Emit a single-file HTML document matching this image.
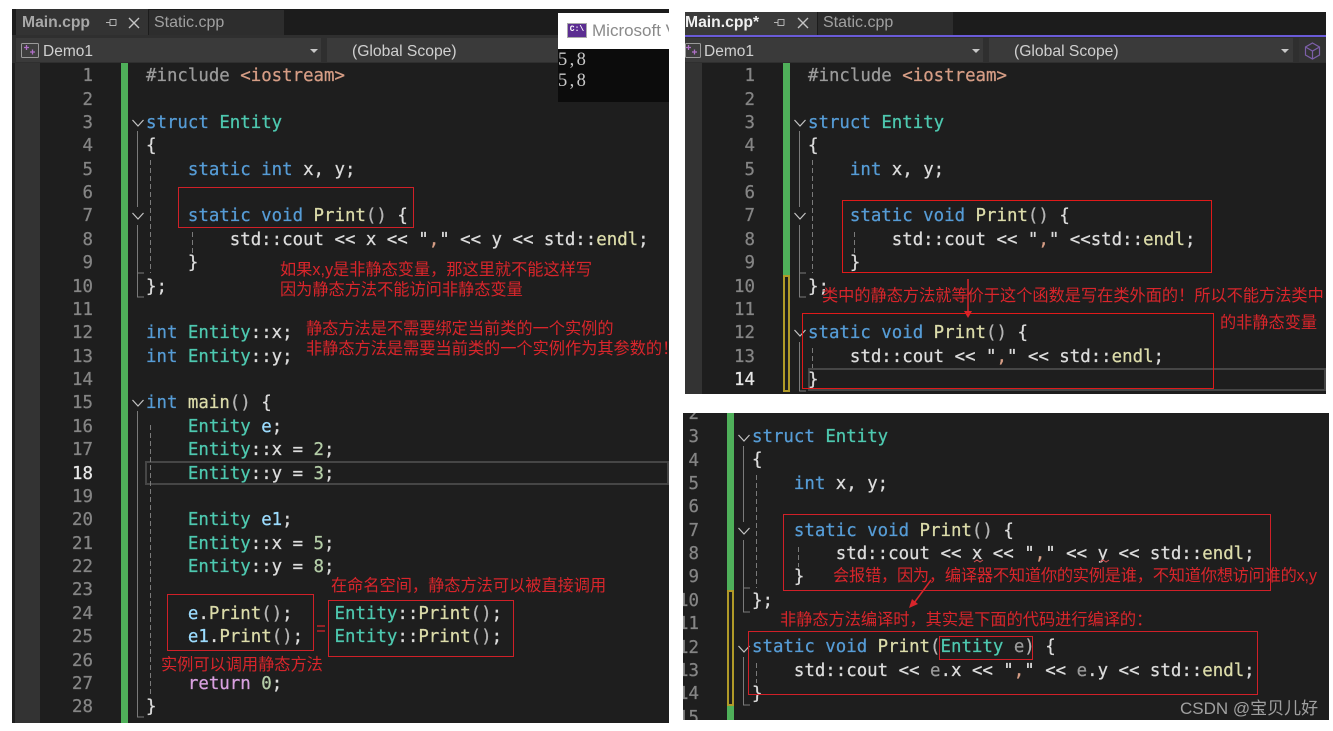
<!DOCTYPE html>
<html><head><meta charset="utf-8">
<style>
html,body{margin:0;padding:0;background:#fff;width:1333px;height:727px;overflow:hidden}
.abs,.c,.n,.z,.u,.a,.b{position:absolute}
.layer{position:absolute;left:0;top:0;width:1333px;height:727px}
.z{background:#1e1e1e}
pre{margin:0;position:absolute;font-family:"DejaVu Sans Mono","Liberation Mono",monospace;font-size:17.4px;line-height:23.37px;color:#dcdcdc;white-space:pre;-webkit-text-stroke:.25px}
pre.n{color:#858585;text-align:right;width:40px}
pre.n b{color:#e8e8e8;font-weight:normal}
pre.con{-webkit-text-stroke:0}
.k{color:#569cd6}.t{color:#4ec9b0}.f{color:#dcdcaa}.v{color:#9cdcfe}.d{color:#b5cea8}.s{color:#d69d85}.p{color:#9b9b9b}.r{color:#d8a0df}.g{color:#9a9a9a}.o{color:#b4b4b4}
.u{font-family:"Liberation Sans","Noto Sans CJK SC",sans-serif;font-size:15.5px;line-height:22px;white-space:nowrap;color:#d0d0d0}
.a{font-family:"Liberation Sans","Noto Sans CJK SC",sans-serif;font-size:16.2px;line-height:20px;white-space:nowrap;color:#d9252b}
.b{border:1px solid #d02028;box-sizing:border-box}
</style></head>
<body>

<!-- PANEL 1 -->
<div class="layer" style="clip-path:inset(9px 664px 4px 12px);background:#1e1e1e">
<div class="z" style="left:15px;top:63px;width:25px;height:664px;background:#333"></div>
<div class="z" style="left:12px;top:9px;width:657px;height:28px;background:#1c1c1c"></div>
<div class="z" style="left:16px;top:9px;width:132px;height:26px;background:#333"></div>
<div class="z" style="left:149px;top:10px;width:135px;height:25px;background:#2d2d2d"></div>
<div class="z" style="left:12px;top:35px;width:657px;height:28px;background:#2f2f2f"></div>
<div class="z" style="left:16px;top:38px;width:305px;height:24px;background:#3a3a3a"></div>
<div class="z" style="left:327px;top:38px;width:342px;height:24px;background:#3a3a3a"></div>
<div class="u" style="left:22px;top:12px;font-weight:bold;color:#a8a8a8;font-size:15.7px">Main.cpp</div>
<div class="u" style="left:154px;top:12px;color:#a0a0a0;font-size:16px">Static.cpp</div>
<div class="u" style="left:43px;top:41px;font-size:15.5px">Demo1</div>
<div class="u" style="left:352px;top:41px;font-size:15.7px">(Global Scope)</div>
<div class="z" style="left:121px;top:63px;width:7px;height:668px;background:#4fb05a"></div>
<pre class="n" style="left:53px;top:65.2px">1
2
3
4
5
6
7
8
9
10
11
12
13
14
15
16
17
<b>18</b>
19
20
21
22
23
24
25
26
27
28</pre>
<div class="z" style="left:145px;top:461px;width:524px;height:24px;background:none;border:2px solid #464646;box-sizing:border-box"></div>
<pre style="left:146px;top:65.2px"><span class="p">#include</span> <span class="s">&lt;iostream&gt;</span>

<span class="k">struct</span> <span class="t">Entity</span>
{
    <span class="k">static int</span> x, y;

    <span class="k">static void</span> <span class="f">Print</span><span class="o">()</span> {
        std::cout &lt;&lt; x &lt;&lt; "<span class="s">,</span>" &lt;&lt; y &lt;&lt; std::<span class="f">endl</span>;
    }
};

<span class="k">int</span> <span class="t">Entity</span>::x;
<span class="k">int</span> <span class="t">Entity</span>::y;

<span class="k">int</span> <span class="f">main</span><span class="o">()</span> {
    <span class="t">Entity</span> <span class="v">e</span>;
    <span class="t">Entity</span>::x = <span class="d">2</span>;
    <span class="t">Entity</span>::y = <span class="d">3</span>;

    <span class="t">Entity</span> <span class="v">e1</span>;
    <span class="t">Entity</span>::x = <span class="d">5</span>;
    <span class="t">Entity</span>::y = <span class="d">8</span>;

    <span class="v">e</span>.<span class="f">Print</span><span class="o">()</span>;    <span class="t">Entity</span>::<span class="f">Print</span><span class="o">()</span>;
    <span class="v">e1</span>.<span class="f">Print</span><span class="o">()</span>;   <span class="t">Entity</span>::<span class="f">Print</span><span class="o">()</span>;

    <span class="r">return</span> <span class="d">0</span>;
}</pre>
</div>

<!-- console -->
<div class="z" style="left:558px;top:13px;width:111px;height:36px;background:#fff;overflow:hidden">
  <div class="z" style="left:9px;top:10px;width:20px;height:15px;background:#5b2d91;border:1px solid #aaa;box-sizing:border-box;color:#fff;font:bold 8px/12px 'Liberation Mono',monospace;text-align:center">C:\</div>
  <div class="u" style="left:34px;top:7px;color:#8a8a8a;font-size:17px">Microsoft Visual</div>
</div>
<div class="z" style="left:558px;top:49px;width:111px;height:53px;background:#0c0c0c"></div>
<pre class="con" style="left:558px;top:50px;font-family:'Liberation Serif',serif;font-size:18.5px;line-height:20.5px;color:#c8c8c8;letter-spacing:2.4px">5,8
5,8</pre>

<!-- PANEL 2 -->
<div class="layer" style="clip-path:inset(12px 7px 333px 685px);background:#1e1e1e">
<div class="z" style="left:685px;top:63px;width:17px;height:340px;background:#333"></div>
<div class="z" style="left:685px;top:12px;width:641px;height:23px;background:#1c1c1c"></div>
<div class="z" style="left:685px;top:12px;width:132px;height:23px;background:#3a3a3a"></div>
<div class="z" style="left:818px;top:12px;width:135px;height:23px;background:#2d2d2d"></div>
<div class="z" style="left:685px;top:35px;width:641px;height:2px;background:#6a5bd8"></div>
<div class="z" style="left:685px;top:37px;width:641px;height:26px;background:#2f2f2f"></div>
<div class="z" style="left:685px;top:38px;width:298px;height:24px;background:#3a3a3a"></div>
<div class="z" style="left:989px;top:38px;width:304px;height:24px;background:#3a3a3a"></div>
<div class="z" style="left:1299px;top:38px;width:27px;height:24px;background:#333"></div>
<div class="u" style="left:685px;top:12px;font-weight:bold;color:#f0f0f0;font-size:15.7px">Main.cpp*</div>
<div class="u" style="left:823px;top:12px;color:#a0a0a0;font-size:16px">Static.cpp</div>
<div class="u" style="left:704px;top:41px;font-size:15.5px">Demo1</div>
<div class="u" style="left:1014px;top:41px;font-size:15.7px">(Global Scope)</div>
<div class="z" style="left:783px;top:63px;width:7px;height:212px;background:#4fb05a"></div>
<div class="z" style="left:783px;top:275px;width:7px;height:117px;box-sizing:border-box;background:none;border:2px solid #b09a28"></div>
<pre class="n" style="left:715px;top:65.2px">1
2
3
4
5
6
7
8
9
10
11
12
13
<b>14</b></pre>
<div class="z" style="left:808px;top:368px;width:518px;height:23px;background:none;border:2px solid #464646;box-sizing:border-box"></div>
<pre style="left:808px;top:65.2px"><span class="p">#include</span> <span class="s">&lt;iostream&gt;</span>

<span class="k">struct</span> <span class="t">Entity</span>
{
    <span class="k">int</span> x, y;

    <span class="k">static void</span> <span class="f">Print</span><span class="o">()</span> {
        std::cout &lt;&lt; "<span class="s">,</span>" &lt;&lt;std::<span class="f">endl</span>;
    }
};

<span class="k">static void</span> <span class="f">Print</span><span class="o">()</span> {
    std::cout &lt;&lt; "<span class="s">,</span>" &lt;&lt; std::<span class="f">endl</span>;
}</pre>
</div>

<!-- PANEL 3 -->
<div class="layer" style="clip-path:inset(413px 4px 7px 683px);background:#1e1e1e">
<div class="z" style="left:727px;top:413px;width:7px;height:177px;background:#4fb05a"></div>
<div class="z" style="left:727px;top:590px;width:7px;height:116px;box-sizing:border-box;background:none;border:2px solid #b09a28"></div>
<div class="z" style="left:727px;top:706px;width:7px;height:14px;background:#4fb05a"></div>
<pre class="n" style="left:659px;top:402.8px">2
3
4
5
6
7
8
9
10
11
12
13
14
15</pre>
<pre style="left:752px;top:426.1px"><span class="k">struct</span> <span class="t">Entity</span>
{
    <span class="k">int</span> x, y;

    <span class="k">static void</span> <span class="f">Print</span><span class="o">()</span> {
        std::cout &lt;&lt; x &lt;&lt; "<span class="s">,</span>" &lt;&lt; y &lt;&lt; std::<span class="f">endl</span>;
    }
};

<span class="k">static void</span> <span class="f">Print</span><span class="o">(</span><span class="t">Entity</span> <span class="g">e</span><span class="o">)</span> {
    std::cout &lt;&lt; <span class="g">e</span>.x &lt;&lt; "<span class="s">,</span>" &lt;&lt; <span class="g">e</span>.y &lt;&lt; std::<span class="f">endl</span>;
}</pre>
</div>

<!-- guides, icons -->
<svg class="abs" style="left:0;top:0" width="1333" height="727" viewBox="0 0 1333 727" fill="none">
<g stroke="#7a7a7a" stroke-width="1">
 <path d="M137.5 131V207M137.5 225V297H144M137.5 273H144M137.5 411V717H144"/>
 <path d="M150.5 160V273M192.5 232V254M150.5 425V695" stroke-dasharray="5 3"/>
 <path d="M799.5 131V207M799.5 225V297H806M799.5 273H806M799.5 342V391H806"/>
 <path d="M812.5 160V273M854.5 232V254M812.5 348V368" stroke-dasharray="5 3"/>
 <path d="M743.5 446V522M743.5 540V612H750M743.5 588H750M743.5 657V705H750"/>
 <path d="M756.5 475V588M798.5 547V567M756.5 663V683" stroke-dasharray="5 3"/>
</g>
<g stroke="#c4c4c4" stroke-width="1.2">
 <path d="M132.5 120L138 126L143.5 120M132.5 213L138 219L143.5 213M132.5 400L138 406L143.5 400"/>
 <path d="M794.5 120L800 126L805.5 120M794.5 213L800 219L805.5 213M794.5 330L800 336L805.5 330"/>
 <path d="M738.5 435L744 441L749.5 435M738.5 528L744 534L749.5 528M738.5 646L744 652L749.5 646"/>
</g>
<g stroke="#c4c4c4" stroke-width="1.4">
 <path d="M129 18L139 28M139 18L129 28M798 18L808 28M808 18L798 28"/>
</g>
<g stroke="#b4b4b4" stroke-width="1">
 <path d="M106 22.5H110M110 19.5V25.5H116M110 19.5H116V25.5"/>
 <path d="M774 22.5H778M778 19.5V25.5H784M778 19.5H784V25.5"/>
</g>
<g fill="#c8c8c8">
 <path d="M310 49H318L314 53Z M972 49H980L976 53Z M1281 49H1289L1285 53Z"/>
</g>
<rect x="21.5" y="43.5" width="17" height="14" rx="1" fill="#3e3e3e" stroke="#9a9a9a"/>
<path d="M24 47.5H29M26.5 45V50M30 52H35M32.5 49.5V54.5" stroke="#b070c8" stroke-width="1.3"/>
<rect x="685.5" y="43.5" width="15" height="14" rx="1" fill="#3e3e3e" stroke="#9a9a9a"/>
<path d="M686 47.5H691M688.5 45V50M692 52H697M694.5 49.5V54.5" stroke="#b070c8" stroke-width="1.3"/>
<path d="M1312.5 43L1319.5 47V55L1312.5 59L1305.5 55V47ZM1305.5 47L1312.5 51L1319.5 47M1312.5 51V59" stroke="#7c5fa8" stroke-width="1.2"/>
<path d="M968 279V312" stroke="#d9252b" stroke-width="1.5"/>
<path d="M964 311H972L968 318Z" fill="#d9252b"/>
<path d="M931 580L914 603" stroke="#d9252b" stroke-width="1.5"/>
<path d="M909 608L912 599L918 604Z" fill="#d9252b"/>
<path d="M974 562L977 560L980 562L983 560M1100 562L1103 560L1106 562L1109 560" stroke="#d05050" stroke-width="1"/>
<path d="M317 626H325M317 631H325" stroke="#d9252b" stroke-width="1.2"/>
</svg>

<!-- red boxes -->
<div class="b" style="left:178px;top:187px;width:236px;height:41px"></div>
<div class="b" style="left:167px;top:594px;width:147px;height:57px"></div>
<div class="b" style="left:328px;top:600px;width:186px;height:57px"></div>
<div class="b" style="left:842px;top:200px;width:370px;height:73px;border-color:#e01a1a"></div>
<div class="b" style="left:802px;top:313px;width:412px;height:76px;border-color:#e01a1a"></div>
<div class="b" style="left:783px;top:514px;width:488px;height:77px"></div>
<div class="b" style="left:748px;top:631px;width:510px;height:64px"></div>
<div class="b" style="left:939px;top:636px;width:94px;height:24px"></div>

<!-- annotations -->
<div class="a" style="left:280px;top:260px">如果x,y是非静态变量，那这里就不能这样写</div>
<div class="a" style="left:280px;top:280px">因为静态方法不能访问非静态变量</div>
<div class="a" style="left:306px;top:319px">静态方法是不需要绑定当前类的一个实例的</div>
<div class="a" style="left:306px;top:339px">非静态方法是需要当前类的一个实例作为其参数的！</div>
<div class="a" style="left:331px;top:576px">在命名空间，静态方法可以被直接调用</div>
<div class="a" style="left:161px;top:655px">实例可以调用静态方法</div>
<div class="a" style="left:822px;top:286px">类中的静态方法就等价于这个函数是写在类外面的！所以不能方法类中</div>
<div class="a" style="left:1220px;top:313px">的非静态变量</div>
<div class="a" style="left:833px;top:566px;letter-spacing:-.2px">会报错，因为，编译器不知道你的实例是谁，不知道你想访问谁的x,y</div>
<div class="a" style="left:780px;top:610px">非静态方法编译时，其实是下面的代码进行编译的：</div>
<div class="a" style="left:1180px;top:699px;color:#a0a0a0;font-size:17px">CSDN @宝贝儿好</div>
</body></html>
